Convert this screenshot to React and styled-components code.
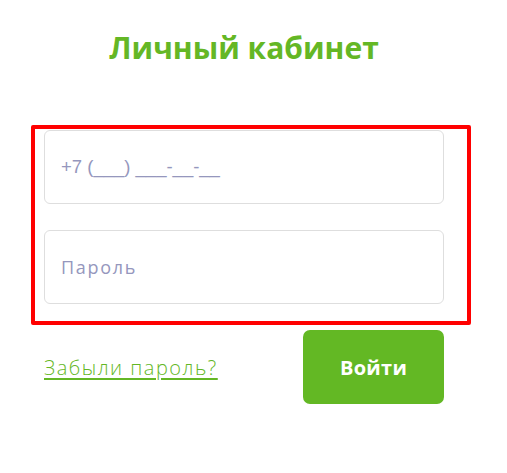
import React from 'react';
import styled, { createGlobalStyle } from 'styled-components';

const GlobalStyle = createGlobalStyle`
  body {
    margin: 0;
    background: #ffffff;
    font-family: "Open Sans", "Liberation Sans", sans-serif;
  }
`;

const Page = styled.main`
  width: 400px;
  padding: 31px 0 0 44px;
`;

const Title = styled.h1`
  margin: 0;
  text-align: center;
  font-size: 30px;
  line-height: 34px;
  font-weight: 700;
  color: #64b725;
`;

const Fields = styled.div`
  margin: 60px -27px 0 -13px;
  padding: 1px 23px 17px 9px;
  border: 4px solid #ff0000;
  border-radius: 2px;
  display: flex;
  flex-direction: column;
  gap: 26px;
`;

// masked phone field keeps the underscores joined, so no tracking there
const Input = styled.input`
  box-sizing: border-box;
  display: block;
  width: 100%;
  height: 74px;
  padding: 0 16px;
  border: 1px solid #dedede;
  border-radius: 6px;
  font-family: ${(p) => (p.$mask ? '"Liberation Sans", Arial, sans-serif' : 'inherit')};
  font-size: ${(p) => (p.$mask ? '18.5px' : '18px')};
  letter-spacing: ${(p) => (p.$mask ? '0' : '1.7px')};
  color: #333;
  outline: none;

  &::placeholder {
    color: #9597bd;
  }
`;

const Actions = styled.div`
  margin-top: 5px;
  display: flex;
  justify-content: space-between;
  align-items: center;
`;

const ForgotLink = styled.a`
  font-size: 20px;
  font-weight: 300;
  letter-spacing: 1.5px;
  color: #64b725;
  text-decoration: underline;
  text-underline-offset: 3px;
  text-decoration-thickness: 2px;
  cursor: pointer;
`;

const SubmitButton = styled.button`
  width: 141px;
  height: 74px;
  border: none;
  border-radius: 7px;
  background: #63b824;
  color: #ffffff;
  font-family: inherit;
  font-size: 20px;
  font-weight: 700;
  letter-spacing: 0.3px;
  cursor: pointer;
`;

const App = () => {
  return (
    <>
      <GlobalStyle />
      <Page>
        <Title>Личный кабинет</Title>
        <Fields>
          <Input type="tel" $mask placeholder="+7 (___) ___-__-__" />
          <Input type="password" placeholder="Пароль" />
        </Fields>
        <Actions>
          <ForgotLink>Забыли пароль?</ForgotLink>
          <SubmitButton>Войти</SubmitButton>
        </Actions>
      </Page>
    </>
  );
};

export default App;
